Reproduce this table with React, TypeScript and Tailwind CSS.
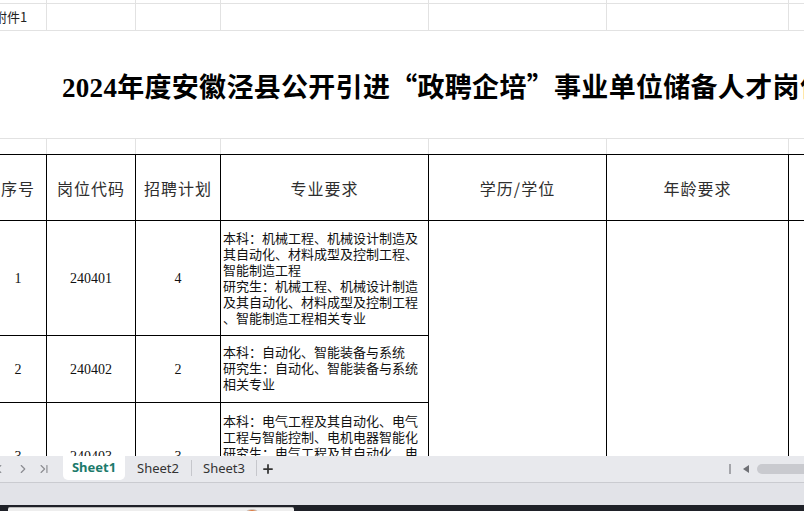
import React from 'react';
import { ChevronLeft, ChevronRight, ChevronLast, Plus } from 'lucide-react';

// column widths shared by the grid rows above the table and by the table itself
const gridCols = 'grid grid-cols-[57px_89px_85px_208px_178px_182px_60px]';

const cjk = { fontFamily: '"Noto Sans CJK SC", "Noto Sans", sans-serif' };

const row1 = [
  '本科：机械工程、机械设计制造及',
  '其自动化、材料成型及控制工程、',
  '智能制造工程',
  '研究生：机械工程、机械设计制造',
  '及其自动化、材料成型及控制工程',
  '、智能制造工程相关专业',
];
const row2 = ['本科：自动化、智能装备与系统', '研究生：自动化、智能装备与系统', '相关专业'];
const row3 = [
  '本科：电气工程及其自动化、电气',
  '工程与智能控制、电机电器智能化',
  '研究生：电气工程及其自动化、电',
  '气工程与智能控制、电机电器智能',
  '化相关专业',
];

const Lines: React.FC<{ lines: string[] }> = ({ lines }) => (
  <div className="text-[13px] leading-[16px] text-[#111] font-['Noto_Sans_CJK_SC',sans-serif]">
    {lines.map((l) => (
      <div key={l} className="whitespace-nowrap">{l}</div>
    ))}
  </div>
);

const Num: React.FC<{ v: string }> = ({ v }) => (
  <span className="text-[14px] text-[#111] font-['Liberation_Serif',serif]">{v}</span>
);

const App: React.FC = () => {
  const gray = 'border-r border-b border-[#e2e2e2]';
  const cell = 'border-r border-b border-black flex items-center justify-center';
  const head = 'border-r border-b border-t border-black flex items-center justify-center text-[16px] tracking-[1px] text-[#2e2e2e] font-[\'Noto_Sans_CJK_SC\',sans-serif]';

  return (
    <div className="w-[804px] h-[511px] overflow-hidden bg-white flex flex-col" style={cjk}>
      {/* sheet area */}
      <div className="h-[456px] overflow-hidden shrink-0">
        <div className="ml-[-10px] w-[859px]">
          {/* top gridline rows */}
          <div className={`${gridCols} h-[4px]`}>
            {[0, 1, 2, 3, 4, 5, 6].map((i) => (
              <div key={i} className={gray} />
            ))}
          </div>
          <div className={`${gridCols} h-[27px]`}>
            <div className={`${gray} flex items-center pl-[4px] text-[13px] text-[#222] whitespace-nowrap`}>附件1</div>
            {[1, 2, 3, 4, 5, 6].map((i) => (
              <div key={i} className={gray} />
            ))}
          </div>
          {/* title row (merged) */}
          <div className="h-[108px] border-b border-[#e2e2e2] flex items-center pl-[72px] pt-[5px] overflow-hidden">
            <h1 className="whitespace-nowrap text-[27px] font-bold text-black tracking-[0.3px] font-['Liberation_Serif','Noto_Sans_CJK_SC',serif]">
              2024年度安徽泾县公开引进<span className="font-['Noto_Sans_CJK_SC',sans-serif]">“</span>政聘企培<span className="font-['Noto_Sans_CJK_SC',sans-serif]">”</span>事业单位储备人才岗位表
            </h1>
          </div>
          <div className={`${gridCols} h-[15px]`}>
            {[0, 1, 2, 3, 4, 5, 6].map((i) => (
              <div key={i} className="border-r border-[#e2e2e2]" />
            ))}
          </div>

          {/* table */}
          <div className={`${gridCols} grid-rows-[67px_115px_67px_108px]`}>
            <div className={head}>序号</div>
            <div className={head}>岗位代码</div>
            <div className={head}>招聘计划</div>
            <div className={head}>专业要求</div>
            <div className={head}>学历/学位</div>
            <div className={head}>年龄要求</div>
            <div className={head} />

            <div className={cell}><Num v="1" /></div>
            <div className={cell}><Num v="240401" /></div>
            <div className={cell}><Num v="4" /></div>
            <div className="border-r border-b border-black flex items-center pl-[2px]"><Lines lines={row1} /></div>
            <div className="border-r border-b border-black row-span-3" />
            <div className="border-r border-b border-black row-span-3" />
            <div className="border-r border-b border-black row-span-3" />

            <div className={cell}><Num v="2" /></div>
            <div className={cell}><Num v="240402" /></div>
            <div className={cell}><Num v="2" /></div>
            <div className="border-r border-b border-black flex items-center pl-[2px] pb-[2px]"><Lines lines={row2} /></div>

            <div className={cell}><Num v="3" /></div>
            <div className={cell}><Num v="240403" /></div>
            <div className={cell}><Num v="3" /></div>
            <div className="border-r border-b border-black flex items-start pl-[2px] pt-[10px]"><Lines lines={row3} /></div>
          </div>
        </div>
      </div>

      {/* sheet tab bar */}
      <div className="h-[27px] shrink-0 bg-[#e8e9ed] border-b border-[#cacbd0] flex items-start font-['Noto_Sans',sans-serif]">
        <div className="h-[25px] flex items-center text-[#8c8d92]">
          <ChevronLeft className="w-[14px] h-[14px] ml-[-8px]" strokeWidth={2} />
          <ChevronRight className="w-[14px] h-[14px] ml-[10px]" strokeWidth={2} />
          <ChevronLast className="w-[14px] h-[14px] ml-[7px]" strokeWidth={2} />
        </div>
        <div className="ml-[12px] w-[62px] h-[24px] bg-white rounded-b-[5px] flex items-center justify-center text-[13px] font-bold text-[#1c7a6b]">
          Sheet1
        </div>
        <div className="w-[66px] h-[25px] flex items-center justify-center text-[13px] text-[#333]">Sheet2</div>
        <div className="mt-[4px] w-px h-[16px] bg-[#c6c7cc]" />
        <div className="w-[64px] h-[25px] flex items-center justify-center text-[13px] text-[#333]">Sheet3</div>
        <div className="mt-[4px] w-px h-[16px] bg-[#c6c7cc]" />
        <div className="h-[25px] flex items-center ml-[4px]">
          <Plus className="w-[14px] h-[14px] text-[#333]" strokeWidth={3} />
        </div>
        <div className="ml-auto h-[25px] flex items-center">
          <div className="w-[2px] h-[10px] bg-[#a4a5aa]" />
          <svg className="ml-[12px]" width="6" height="8" viewBox="0 0 6 8">
            <path d="M6 0 L0 4 L6 8 Z" fill="#6f7075" />
          </svg>
          <div className="ml-[8px] w-[60px] h-[10px] rounded-full bg-[#c9cacf] mr-[-13px]" />
        </div>
      </div>

      {/* status strip */}
      <div className="h-[22px] shrink-0 bg-[#e2e3e8]" />

      {/* taskbar edge */}
      <div className="flex-1 bg-[#1f2128] flex items-end">
        <div className="ml-[8px] w-[286px] h-[4px] bg-[#eeeeee] border-t border-[#b9b9b9] rounded-t-[2px] flex justify-end overflow-hidden">
          <div className="mr-[32px] mt-[1px] w-[20px] h-[20px] rounded-full bg-[#e07a3c] border border-[#c9c9c9]" />
        </div>
      </div>
    </div>
  );
};

export default App;
